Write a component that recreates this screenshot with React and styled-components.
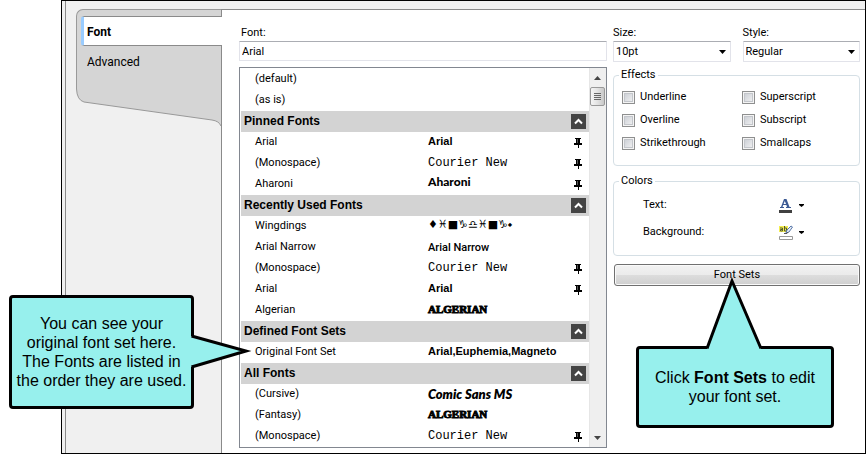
import React from "react";
import styled, { createGlobalStyle, css } from "styled-components";

const UI = 'Roboto, "Open Sans", sans-serif';
const ARIAL = '"Liberation Sans", Arial, sans-serif';

const GlobalStyle = createGlobalStyle`
  *, *::before, *::after { box-sizing: border-box; }
  body { margin: 0; background: #fff; color: #000; font: 11px/16px ${UI}; }
  button, input, select { font: inherit; color: inherit; margin: 0; }
`;

const Page = styled.main`
  position: relative;
  min-height: 100vh;
  padding-left: 61px;
  display: flex;
`;

const Dialog = styled.div`
  flex: 1;
  min-width: 0;
  display: grid;
  grid-template-columns: 156px minmax(0, 1fr);
  padding-left: 3px;
  border: 1px solid #000;
  background: #f0f0f0;
`;

const Side = styled.div`
  border-left: 1px solid #8a8a8a;
  padding: 8px 0 0 10px;
`;

const Tabs = styled.nav`
  display: flex;
  flex-direction: column;
  height: 80px;
  padding: 6px 0 0 4px;
  background: #d5d5d5;
  border: solid #999;
  border-width: 1px 0 0 1px;
  border-top-left-radius: 7px;
`;

const Tab = styled.button`
  position: relative;
  height: 30px;
  flex: none;
  padding: 2px 0 0 6px;
  border: 0;
  background: none;
  font: 12px/16px ${UI};
  text-align: left;
  ${(p) =>
    p.$active &&
    css`
      margin-right: -1px;
      padding-left: 3px;
      background: #fff;
      border: solid #8a8a8a;
      border-width: 1px 0;
      border-left: 3px solid #99ccff;
      border-radius: 3px 0 0 3px;
      font-weight: 700;
    `}
`;

const Tail = styled.svg`
  display: block;
  width: 100%;
  height: 38px;
`;

const Panel = styled.div`
  display: grid;
  grid-template-columns: minmax(0, 1fr) 247px;
  column-gap: 6px;
  align-items: start;
  margin-top: 8px;
  padding: 15px 5px 5px 17px;
  border: solid #8a8a8a;
  border-width: 1px 0 0 1px;
  background: #fff;
`;

const Column = styled.div`
  display: flex;
  flex-direction: column;
  min-width: 0;
`;

const Label = styled.label`
  display: block;
  padding-left: ${(p) => (p.$flush ? 0 : 2)}px;
`;

const fieldBox = css`
  width: 100%;
  border: 1px solid #e2e3ea;
  border-top-color: #abadb3;
  border-radius: 1px;
  background: #fff;
  outline: 0;
`;

const TextInput = styled.input`
  ${fieldBox}
  height: 20px;
  padding: 0 2px;
`;

const Pair = styled.div`
  display: grid;
  grid-template-columns: 1fr 1fr;
  gap: 12px;
  margin-bottom: 5px;
`;

const SelectWrap = styled.div`
  position: relative;
`;

const Select = styled.select`
  ${fieldBox}
  display: block;
  appearance: none;
  height: 21px;
  padding: 0 2px;
`;

const SelectArrow = styled.svg`
  position: absolute;
  right: 5px;
  top: 9px;
  pointer-events: none;
`;

const ListBox = styled.div`
  display: grid;
  grid-template-columns: minmax(0, 1fr) 17px;
  margin-top: 6px;
  padding-left: 1px;
  border: 1px solid #828790;
`;

const Groups = styled.div`
  padding-top: 1px;
`;

const GroupHeader = styled.h2`
  display: flex;
  align-items: center;
  justify-content: space-between;
  height: 21px;
  margin: 0;
  padding: 0 3px;
  background: #d3d3d3;
  font: 700 12px/21px ${ARIAL};
`;

const Toggle = styled.button`
  display: grid;
  place-items: center;
  width: 15px;
  height: 15px;
  padding: 0;
  border: 0;
  background: #444;
`;

const Rows = styled.ul`
  margin: 0;
  padding: 0;
  list-style: none;
`;

const Row = styled.li`
  display: grid;
  grid-template-columns: 173px minmax(0, 1fr) 14px;
  align-items: start;
  height: 21px;
  padding: 0 0 0 14px;
  margin-right: 1px;
  line-height: 19px;
  white-space: nowrap;
`;

const samples = {
  arial: css`font: 700 11px/19px ${ARIAL};`,
  courier: css`font: 12px/21px "Liberation Mono", monospace;`,
  aharoni: css`font: 900 12px/15px Lato, sans-serif;`,
  wing: css`font: 700 11px/17px "DejaVu Sans", sans-serif;`,
  narrow: css`font: 500 11px/21px Roboto, sans-serif;`,
  algerian: css`
    font: 700 11px/19px "Liberation Serif", serif;
    -webkit-text-stroke: 1px #000;
  `,
  comic: css`font: italic 800 13px/21px Lato, sans-serif;`,
};

const Sample = styled.span`
  color: #000;
  ${(p) => samples[p.$face]}
`;

const ScrollBar = styled.div`
  display: flex;
  flex-direction: column;
  align-items: center;
  padding: 0 1px 0 0;
  background: #efefef;
  border-left: 1px solid #e6e6e6;
`;

const ScrollButton = styled.button`
  display: grid;
  place-items: center;
  width: 15px;
  height: 19px;
  padding: 0;
  border: 0;
  background: none;
  ${(p) => p.$end && "margin-top: auto;"}
`;

const Thumb = styled.div`
  display: grid;
  place-items: center;
  width: 15px;
  height: 19px;
  border: 1px solid #999;
  border-radius: 2px;
  background: linear-gradient(90deg, #f5f5f5, #e2e2e2 50%, #c8c8c8);
`;

const Group = styled.fieldset`
  min-width: 0;
  margin: 0;
  border: 1px solid #d5dfe5;
  border-radius: 4px;
  padding: ${(p) => p.$pad};

  & + & {
    margin-top: 7px;
  }
`;

const Legend = styled.legend`
  height: 16px;
  padding: 0 2px;
`;

const Checks = styled.div`
  display: grid;
  grid-template-columns: 120px 1fr;
  row-gap: 7px;
  padding-left: 3px;
`;

const Check = styled.label`
  display: flex;
  align-items: center;
  gap: 5px;
`;

const CheckBox = styled.input`
  appearance: none;
  width: 13px;
  height: 13px;
  border: 1px solid #8e8f8f;
  background: linear-gradient(135deg, #c5c9d0, #f6f6f6);
  box-shadow: inset 0 0 0 1px #f4f4f4, inset 0 0 0 2px #c3c6cb;
`;

const ColorRow = styled.div`
  display: grid;
  grid-template-columns: 136px 1fr;
  align-items: center;
  height: 27px;
  padding-left: 24px;
`;

const ColorButton = styled.button`
  display: flex;
  align-items: center;
  justify-self: start;
  gap: 6px;
  padding: 2px 0 0;
  border: 0;
  background: none;
`;

const ButtonWrap = styled.div`
  position: relative;
  margin: 8px 0 0 1px;
`;

const PushButton = styled.button`
  display: block;
  width: 100%;
  height: 22px;
  padding: 0;
  border: 1px solid #707070;
  border-radius: 3px;
  background: linear-gradient(#f2f2f2, #ebebeb 50%, #dddddd 50%, #cfcfcf);
  box-shadow: inset 0 0 0 1px #fafafa;
`;

const Callout = styled.aside`
  position: absolute;
  z-index: 2;
  left: ${(p) => p.$left}px;
  top: ${(p) => p.$top}px;
  width: ${(p) => p.$width}px;
  height: ${(p) => p.$height}px;
  display: grid;
  place-items: center;
  border: 3px solid #000;
  border-radius: 4px;
  background: #97f0ed;
  font: 16px/19px ${ARIAL};
  text-align: center;
  white-space: nowrap;
`;

const Pointer = styled.svg`
  position: absolute;
  ${(p) => (p.$side === "right" ? "left: 100%; top: 36px;" : "left: 66px; bottom: 100%;")}
  ${(p) => (p.$side === "right" ? "margin-left: -1px;" : "margin-bottom: -1px;")}
  overflow: visible;
`;

const PinIcon = styled.svg`
  margin-top: 6px;
`;

const Pin = () => (
  <PinIcon width="8" height="10" viewBox="0 0 8 10" role="img" aria-label="Pinned">
    <path d="M1 0h6v1H6v4h2v2H5v3H4V7H0V5h2V1H1z" />
    <path d="M3 1h1v4H3z" fill="#555" />
  </PinIcon>
);

const Chevron = () => (
  <svg width="9" height="7" viewBox="0 0 9 7" aria-hidden="true">
    <path d="M1 5.5 4.5 2 8 5.5" fill="none" stroke="#fff" strokeWidth="2" />
  </svg>
);

const Down = () => (
  <svg width="5" height="3" viewBox="0 0 5 3" aria-hidden="true">
    <path d="M0 0h5v1L2.5 3 0 1z" />
  </svg>
);

const TextColorIcon = () => (
  <svg width="14" height="14" viewBox="0 0 14 14" aria-hidden="true">
    <path d="M5 0h2.5l3 8H12v1H7V8h1L7.4 6H4.2L3.5 8H5v1H1V8h1zM4.6 5H7L5.8 2z" fill="#3c5a94" />
    <path d="M0 11h13v3H0z" fill="#404040" />
  </svg>
);

const BackColorIcon = () => (
  <svg width="14" height="15" viewBox="0 0 14 15" aria-hidden="true">
    <path d="M0 1h9v6H0z" fill="#f4ee50" />
    <path d="M1 3h2.500v3H1.500V4.500h2M5.500 1v5h2V3h-2" fill="none" stroke="#555a30" />
    <path d="m7 8 1-3 4-4 1.500 1L10 7z" fill="#e8eef6" stroke="#5a78aa" />
    <path d="M5 8.500h3L9 7" fill="none" stroke="#555" />
    <path d="M.5 11.500h13v3H.5z" fill="#fff" stroke="#999" />
  </svg>
);

const groups = [
  { rows: [["(default)"], ["(as is)"]] },
  {
    title: "Pinned Fonts",
    rows: [
      ["Arial", "Arial", "arial", true],
      ["(Monospace)", "Courier New", "courier", true],
      ["Aharoni", "Aharoni", "aharoni", true],
    ],
  },
  {
    title: "Recently Used Fonts",
    rows: [
      ["Wingdings", "♦♓\uFE0E■♑\uFE0E♎\uFE0E♓\uFE0E■♑\uFE0E⬩", "wing"],
      ["Arial Narrow", "Arial Narrow", "narrow"],
      ["(Monospace)", "Courier New", "courier", true],
      ["Arial", "Arial", "arial", true],
      ["Algerian", "ALGERIAN", "algerian"],
    ],
  },
  {
    title: "Defined Font Sets",
    rows: [["Original Font Set", "Arial,Euphemia,Magneto", "arial"]],
  },
  {
    title: "All Fonts",
    rows: [
      ["(Cursive)", "Comic Sans MS", "comic"],
      ["(Fantasy)", "ALGERIAN", "algerian"],
      ["(Monospace)", "Courier New", "courier", true],
    ],
  },
];

const effects = ["Underline", "Superscript", "Overline", "Subscript", "Strikethrough", "Smallcaps"];

function FontList() {
  return (
    <ListBox>
      <Groups>
        {groups.map((g, i) => (
          <section key={i}>
            {g.title && (
              <GroupHeader>
                {g.title}
                <Toggle aria-label={`Collapse ${g.title}`}>
                  <Chevron />
                </Toggle>
              </GroupHeader>
            )}
            <Rows>
              {g.rows.map(([name, sample, face, pinned], j) => (
                <Row key={j}>
                  <span>{name}</span>
                  <Sample $face={face}>{sample}</Sample>
                  {pinned && <Pin />}
                </Row>
              ))}
            </Rows>
          </section>
        ))}
      </Groups>
      <ScrollBar>
        <ScrollButton aria-label="Scroll up">
          <svg width="7" height="4" viewBox="0 0 7 4">
            <path d="M0 4h7L3.500 0z" fill="#444" />
          </svg>
        </ScrollButton>
        <Thumb>
          <svg width="7" height="8" viewBox="0 0 7 8">
            <path d="M0 .5h7M0 2.500h7M0 4.500h7M0 6.500h7" stroke="#666" />
          </svg>
        </Thumb>
        <ScrollButton $end aria-label="Scroll down">
          <svg width="7" height="4" viewBox="0 0 7 4">
            <path d="M0 0h7L3.500 4z" fill="#444" />
          </svg>
        </ScrollButton>
      </ScrollBar>
    </ListBox>
  );
}

function Dropdown({ id, label, value }) {
  return (
    <div>
      <Label htmlFor={id} $flush>
        {label}
      </Label>
      <SelectWrap>
        <Select id={id} defaultValue={value}>
          <option>{value}</option>
        </Select>
        <SelectArrow width="7" height="4" viewBox="0 0 7 4">
          <path d="M0 0h7L3.500 4z" />
        </SelectArrow>
      </SelectWrap>
    </div>
  );
}

export default function App() {
  return (
    <Page>
      <GlobalStyle />
      <Dialog>
        <Side>
          <Tabs>
            <Tab $active>Font</Tab>
            <Tab>Advanced</Tab>
          </Tabs>
          <Tail viewBox="0 0 145 38" preserveAspectRatio="none" aria-hidden="true">
            <path d="M.5 0Q1 11 8 13L136 31Q143 32 145 37V0z" fill="#d5d5d5" />
            <path d="M.5 0Q1 11 8 13L136 31Q143 32 145 37" fill="none" stroke="#999" />
          </Tail>
        </Side>
        <Panel>
          <Column>
            <Label htmlFor="font">Font:</Label>
            <TextInput id="font" defaultValue="Arial" />
            <FontList />
          </Column>
          <Column>
            <Pair>
              <Dropdown id="size" label="Size:" value="10pt" />
              <Dropdown id="style" label="Style:" value="Regular" />
            </Pair>
            <Group $pad="6px 5px 14px">
              <Legend>Effects</Legend>
              <Checks>
                {effects.map((e) => (
                  <Check key={e}>
                    <CheckBox type="checkbox" />
                    {e}
                  </Check>
                ))}
              </Checks>
            </Group>
            <Group $pad="2px 5px 10px">
              <Legend>Colors</Legend>
              <ColorRow>
                <span id="text-color">Text:</span>
                <ColorButton aria-labelledby="text-color">
                  <TextColorIcon />
                  <Down />
                </ColorButton>
              </ColorRow>
              <ColorRow>
                <span id="back-color">Background:</span>
                <ColorButton aria-labelledby="back-color">
                  <BackColorIcon />
                  <Down />
                </ColorButton>
              </ColorRow>
            </Group>
            <ButtonWrap>
              <PushButton>Font Sets</PushButton>
              <Callout $left={22} $top={82} $width={198} $height={82}>
                <Pointer $side="top" width="59" height="72" viewBox="0 0 59 72">
                  <path d="M2 70 27 3 56 70V74H2z" fill="#97f0ed" />
                  <path d="M2 70.500 27 3 56 70.500" fill="none" stroke="#000" strokeWidth="3" />
                </Pointer>
                <div>
                  Click <b>Font Sets</b> to edit
                  <br />
                  your font set.
                </div>
              </Callout>
            </ButtonWrap>
          </Column>
        </Panel>
      </Dialog>
      <Callout $left={9} $top={295} $width={185} $height={114}>
        <Pointer $side="right" width="60" height="36" viewBox="0 0 60 36">
          <path d="M-3 2H2L56 17 2 33H-3z" fill="#97f0ed" />
          <path d="M1.500 2 56 17 1.500 33" fill="none" stroke="#000" strokeWidth="3" />
        </Pointer>
        <div>
          You can see your
          <br />
          original font set here.
          <br />
          The Fonts are listed in
          <br />
          the order they are used.
        </div>
      </Callout>
    </Page>
  );
}
